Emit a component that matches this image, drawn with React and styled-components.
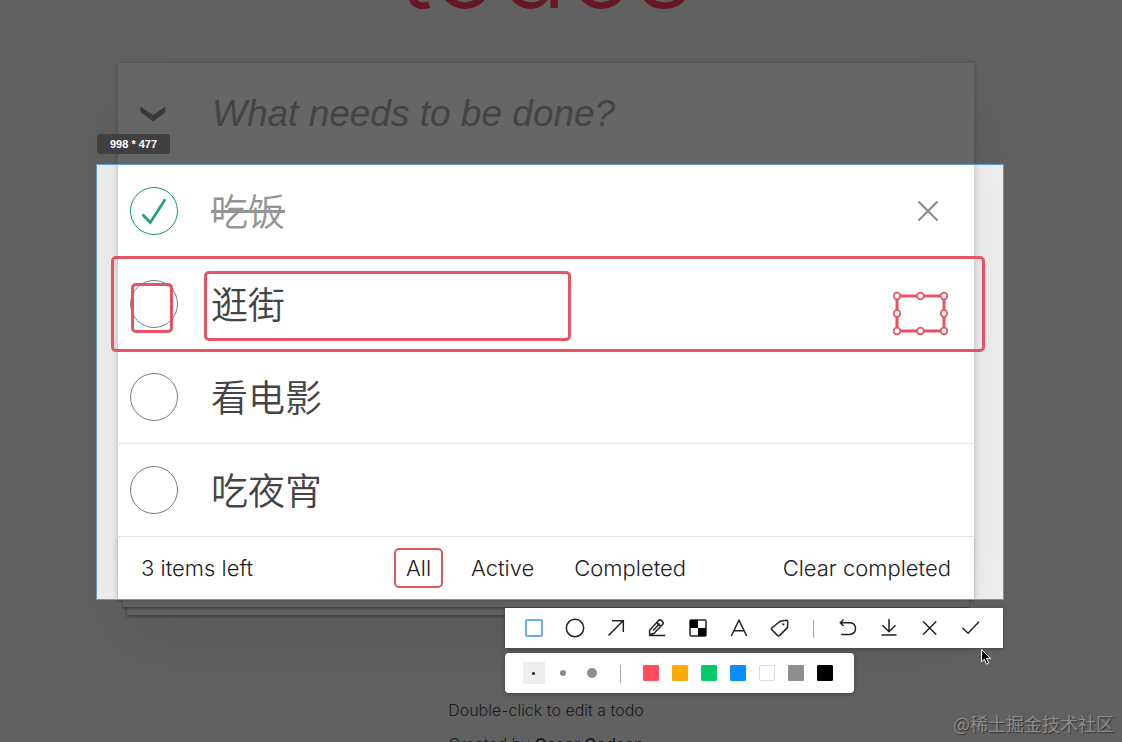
import React, { useState } from "react";
import styled, { createGlobalStyle } from "styled-components";

const sans = `"Inter", "Liberation Sans", "Noto Sans CJK SC", sans-serif`;
const red = "#e85363";

const GlobalStyle = createGlobalStyle`
  *, *::before, *::after { box-sizing: border-box; }
  body { margin: 0; background: #f5f5f5; font-family: ${sans}; }
  button, input { font: inherit; color: inherit; }
  button { padding: 0; border: 0; background: none; }
`;

const Page = styled.div`
  position: relative;
  height: 100vh;
  overflow: hidden;
  padding: 0 148px 0 118px;
  background: #f4f3f4;
  font-weight: 300;
`;

const Header = styled.header`
  display: flex;
  align-items: flex-end;
  justify-content: center;
  height: 63px;
`;

const Title = styled.h1`
  margin: 0 0 36px;
  font-size: 114px;
  line-height: 120px;
  font-weight: 300;
  color: #ff3a62;
`;

const Card = styled.main`
  position: relative;
  background: #fff;
  box-shadow: 0 0 6px rgba(0, 0, 0, 0.2), 0 39px 78px rgba(0, 0, 0, 0.1);
`;

const EntryRow = styled.div`
  display: flex;
  align-items: center;
  height: 102px;
  border-bottom: 1px solid #ededed;
`;

const ToggleAll = styled.button`
  display: grid;
  place-items: center;
  width: 70px;
  height: 60px;
  margin-right: 24px;
  color: #909090;
`;

const Entry = styled.input`
  flex: 1;
  min-width: 0;
  padding: 0;
  border: 0;
  outline: 0;
  background: none;
  font-family: "Liberation Sans", sans-serif;
  font-size: 37px;
  &::placeholder { color: #aaa; font-style: italic; opacity: 1; }
`;

const List = styled.ul`
  margin: 0;
  padding: 0;
  list-style: none;
`;

const Item = styled.li`
  display: flex;
  align-items: center;
  height: 93px;
  padding: 0 32px 0 12px;
  border-bottom: 1px solid #e6e6e6;
`;

const ItemLabel = styled.label`
  display: flex;
  flex: 1;
  align-items: center;
  gap: 33px;
  font-family: "Noto Sans CJK SC", sans-serif;
  font-size: 37px;
  font-weight: 350;
  line-height: 48px;
  color: ${(p) => (p.$done ? "#949494" : "#444")};
`;

const ItemText = styled.span`
  padding-bottom: 2px;
  text-decoration: ${(p) => (p.$done ? "line-through" : "none")};
`;

const Tick = styled.span`
  display: grid;
  place-items: center;
  width: 48px;
  height: 48px;
  & > * { grid-area: 1 / 1; }
`;

const TickBox = styled.input`
  appearance: none;
  width: 48px;
  height: 48px;
  margin: 0;
  border: 1px solid #7c7c7c;
  border-radius: 50%;
  &:checked { border-color: #129a72; }
`;

const RemoveButton = styled.button`
  display: grid;
  place-items: center;
  width: 28px;
  height: 28px;
  color: #8c8c8c;
`;

const Footer = styled.footer`
  position: relative;
  display: grid;
  grid-template-columns: 1fr auto 1fr;
  align-items: center;
  height: 62px;
  padding: 0 23px;
  font-size: 22px;
  color: #1c1c1c;
  box-shadow: 0 2px 2px rgba(0, 0, 0, 0.2), 0 13px 0 -5px #f6f3f4,
    0 15px 2px -5px rgba(0, 0, 0, 0.3), 0 25px 0 -9px #f0eeef,
    0 27px 3px -9px rgba(0, 0, 0, 0.3);
`;

const Filters = styled.nav`
  display: flex;
  gap: 16px;
`;

const Filter = styled.a`
  padding: 0 10px;
  border: 2px solid ${(p) => (p.$active ? "#dc5a5c" : "transparent")};
  border-radius: 5px;
  line-height: 36px;
  color: inherit;
  text-decoration: none;
`;

const ClearButton = styled.button`
  justify-self: end;
`;

const Info = styled.div`
  margin-top: 101px;
  font-size: 16px;
  line-height: 20px;
  text-align: center;
  color: #484848;
  p { margin: 0 0 14px; }
  a { color: inherit; font-weight: 500; text-decoration: none; }
`;

const Selection = styled.section`
  position: absolute;
  top: 101px;
  bottom: -1px;
  left: -22px;
  right: -30px;
  border: 1px solid #5b9bc8;
  box-shadow: 0 0 0 2000px rgba(0, 0, 0, 0.6);
`;

const SizeTag = styled.div`
  position: absolute;
  bottom: 100%;
  left: 0;
  margin-bottom: 11px;
  padding: 0 13px;
  border-radius: 3px;
  background: #404040;
  color: #fff;
  font: bold 11px/20px "Liberation Sans", sans-serif;
`;

const Mark = styled.div`
  position: absolute;
  top: ${(p) => p.$top}px;
  left: ${(p) => p.$left}px;
  right: ${(p) => (p.$right === undefined ? "auto" : `${p.$right}px`)};
  width: ${(p) => (p.$width ? `${p.$width}px` : "auto")};
  height: ${(p) => p.$height}px;
  border: 3px solid ${red};
  border-radius: 5px;
`;

const HandledMark = styled.svg`
  position: absolute;
  top: 126px;
  right: 54px;
`;

const Tools = styled.div`
  position: absolute;
  top: 100%;
  right: 0;
  display: flex;
  flex-direction: column;
  align-items: flex-start;
  gap: 5px;
  margin-top: 9px;
`;

const Toolbar = styled.div`
  display: flex;
  align-items: center;
  height: 40px;
  padding: 0 12px 0 8px;
  background: #fff;
  color: #222;
  box-shadow: 0 1px 4px rgba(0, 0, 0, 0.3);
`;

const Palette = styled(Toolbar)`
  padding: 0 15px 0 14px;
  border-radius: 4px;
`;

const Group = styled.div`
  display: flex;
  padding-left: ${(p) => p.$inset || 0}px;
`;

const ToolButton = styled.button`
  display: grid;
  place-items: center;
  width: 41px;
  height: 40px;
  color: ${(p) => (p.$active ? "#3a96dd" : "#222")};
`;

const Separator = styled.span`
  width: 1px;
  height: 18px;
  margin: 2px ${(p) => p.$space}px 0;
  background: #aaa;
`;

const PaletteButton = styled.button`
  display: grid;
  place-items: center;
  width: 29px;
  height: 40px;
`;

const SizeWell = styled.span`
  display: grid;
  place-items: center;
  width: 22px;
  height: 22px;
  background: ${(p) => (p.$active ? "#ededed" : "none")};
`;

const Dot = styled.span`
  width: ${(p) => p.$size}px;
  height: ${(p) => p.$size}px;
  border-radius: 50%;
  background: ${(p) => (p.$active ? "#111" : "#8c8c8c")};
`;

const Swatch = styled.span`
  width: 16px;
  height: 16px;
  border: 1px solid ${(p) => (p.$color === "#ffffff" ? "#dcdcdc" : p.$color)};
  border-radius: 1px;
  background: ${(p) => p.$color};
`;

const Pointer = styled.svg`
  position: absolute;
  top: 40px;
  right: 11px;
`;

const Watermark = styled.div`
  position: absolute;
  right: 8px;
  bottom: 6px;
  font: 18px/26px "Noto Sans CJK SC", sans-serif;
  color: #8d8b8d;
  text-shadow: 1px 1px 1px #333;
`;

const Icon = ({ children, size = 20, width = 1.5 }) => (
  <svg width={size} height={size} viewBox={`0 0 ${size} ${size}`} fill="none"
    stroke="currentColor" strokeWidth={width} aria-hidden="true">
    {children}
  </svg>
);

const drawTools = [
  ["Rectangle", <rect x="2" y="2" width="16" height="16" rx="1" />],
  ["Ellipse", <circle cx="10" cy="10" r="8.7" />],
  ["Arrow", <path d="M2.5 17.5 17.2 2.8M6 2.7h11.3V14" />],
  ["Pen", <path d="M1.8 17.4h16.4M2.6 16.6v-4.4L11.6 2.6q1.5-1.4 3 0l.9.8q1.4 1.5 0 3L6.8 15.6l-4.2 1M10.3 4.4q.6 3.4 4.2 3.4M12.6 5.6 6.2 12.4" />],
  ["Mosaic", <><rect x="2" y="2" width="16" height="16" rx="1" /><path d="M2 2h8v8H2zM10 10h8v8h-8z" fill="#000" stroke="none" /></>],
  ["Text", <path d="M2.3 18 10 2.2 17.7 18M5 12.7h10" />],
  ["Tag", <><path d="M10.2 3.2 16.4 2.2q1.2 0 1.3 1.2l-.2 6.2-8 8q-.9.7-1.8 0L1.6 11.5q-.6-.8.2-1.5z" /><circle cx="13.4" cy="6.3" r="1.1" fill="currentColor" stroke="none" /></>],
];

const actionTools = [
  ["Undo", <path d="M5.5 1.5 2.3 4.8 5.5 8M2.5 4.8H12q5.5.5 5.5 5.8T12 16.4H3.2" />],
  ["Save", <path d="M10 1v12.5M3.5 7.3 10 13.7l6.5-6.4M2.5 17h15" />],
  ["Cancel", <path d="M3.2 3.5l13 13M16.2 3.5l-13 13" />],
  ["Confirm", <path d="M1.4 9.8 7.1 15.3 18 3.7" />],
];

const colors = [
  ["Red", "#ff4d5f"], ["Orange", "#ffa90a"], ["Green", "#07c968"], ["Blue", "#078eff"],
  ["White", "#ffffff"], ["Gray", "#8d8d8d"], ["Black", "#000000"],
];

const initialTodos = [
  { text: "吃饭", done: true },
  { text: "逛街", done: false },
  { text: "看电影", done: false },
  { text: "吃夜宵", done: false },
];

function Todo({ todo, onToggle }) {
  return (
    <Item>
      <ItemLabel $done={todo.done}>
        <Tick>
          <TickBox type="checkbox" checked={todo.done} onChange={onToggle} />
          {todo.done && (
            <svg width="28" height="28" viewBox="0 0 28 28" fill="none" stroke="#25a17d" strokeWidth="2.8" aria-hidden="true">
              <path d="M2.5 17.5 10.3 25.5 25.2 2.2" />
            </svg>
          )}
        </Tick>
        <ItemText $done={todo.done}>{todo.text}</ItemText>
      </ItemLabel>
      {todo.done && (
        <RemoveButton aria-label="Remove">
          <Icon size={22} width={2.2}><path d="M1.5 1.5l19 19M20.5 1.5l-19 19" /></Icon>
        </RemoveButton>
      )}
    </Item>
  );
}

const handles = [[5, 5], [28.5, 5], [52, 5], [5, 22.5], [52, 22.5], [5, 40], [28.5, 40], [52, 40]];

function Capture() {
  return (
    <Selection aria-label="Capture area">
      <SizeTag>998 * 477</SizeTag>
      <Mark $top={91} $left={14} $right={18} $height={96} />
      <Mark $top={118} $left={34} $width={42} $height={50} />
      <Mark $top={106} $left={107} $width={367} $height={70} />
      <HandledMark width="57" height="45" viewBox="0 0 57 45" fill="none" stroke={red} aria-hidden="true">
        <rect x="5" y="5" width="47" height="35" strokeWidth="3" />
        {handles.map(([x, y]) => (
          <circle key={`${x}-${y}`} cx={x} cy={y} r="3.3" fill="#fff" strokeWidth="1.7" />
        ))}
      </HandledMark>
      <Tools>
        <Toolbar role="toolbar">
          {drawTools.map(([name, shape], i) => (
            <ToolButton key={name} aria-label={name} $active={i === 0}><Icon>{shape}</Icon></ToolButton>
          ))}
          <Separator $space={13} />
          {actionTools.map(([name, shape]) => (
            <ToolButton key={name} aria-label={name}><Icon>{shape}</Icon></ToolButton>
          ))}
        </Toolbar>
        <Palette role="toolbar">
          <Group>
            {[3, 6, 10].map((size, i) => (
              <PaletteButton key={size} aria-label={`Line ${size}`}>
                <SizeWell $active={i === 0}><Dot $size={size} $active={i === 0} /></SizeWell>
              </PaletteButton>
            ))}
          </Group>
          <Separator $space={14} />
          <Group $inset={1}>
            {colors.map(([name, value]) => (
              <PaletteButton key={name} aria-label={name}><Swatch $color={value} /></PaletteButton>
            ))}
          </Group>
        </Palette>
        <Pointer width="12" height="18" viewBox="0 0 12 18" aria-hidden="true">
          <path d="M1.5 1.5v12.3l2.8-2.6 2.1 4.9 2.2-1-2.1-4.7h4z" fill="#000" stroke="#fff" strokeWidth="1" />
        </Pointer>
      </Tools>
    </Selection>
  );
}

export default function App() {
  const [todos, setTodos] = useState(initialTodos);
  const toggle = (index) =>
    setTodos(todos.map((t, i) => (i === index ? { ...t, done: !t.done } : t)));
  return (
    <Page>
      <GlobalStyle />
      <Header><Title>todos</Title></Header>
      <Card>
        <EntryRow>
          <ToggleAll aria-label="Toggle all">
            <svg width="26" height="18" viewBox="0 0 26 18" fill="currentColor" aria-hidden="true">
              <path d="M.5 1.5 13 10 25.5 1.5v5.5L13 16.5.5 7z" />
            </svg>
          </ToggleAll>
          <Entry aria-label="New todo" placeholder="What needs to be done?" />
        </EntryRow>
        <List>
          {todos.map((todo, i) => <Todo key={todo.text} todo={todo} onToggle={() => toggle(i)} />)}
        </List>
        <Footer>
          <span>3 items left</span>
          <Filters>
            <Filter href="#/" $active>All</Filter>
            <Filter href="#/active">Active</Filter>
            <Filter href="#/completed">Completed</Filter>
          </Filters>
          <ClearButton>Clear completed</ClearButton>
        </Footer>
        <Capture />
      </Card>
      <Info>
        <p>Double-click to edit a todo</p>
        <p>Created by <a href="#/author">Oscar Godson</a></p>
      </Info>
      <Watermark>@稀土掘金技术社区</Watermark>
    </Page>
  );
}
